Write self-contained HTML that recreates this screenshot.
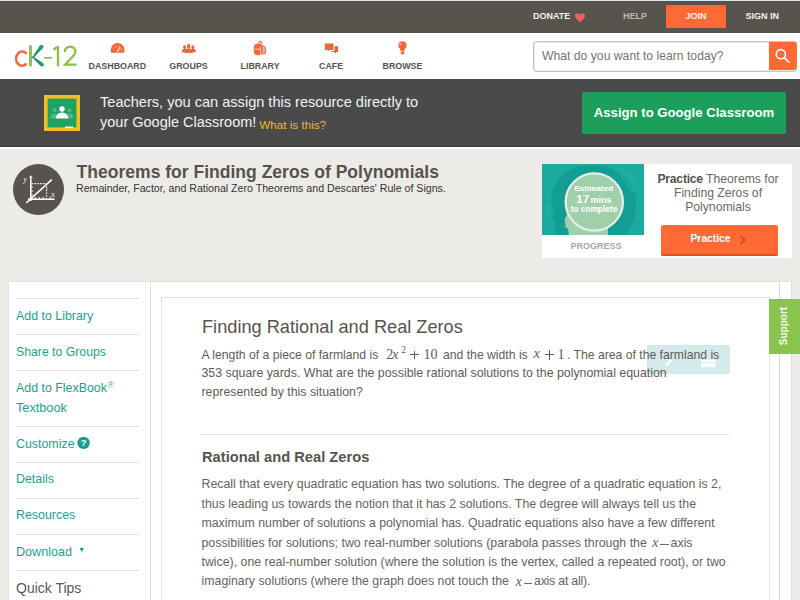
<!DOCTYPE html>
<html><head><meta charset="utf-8">
<style>
html,body{margin:0;padding:0;}
body{width:800px;height:600px;overflow:hidden;position:relative;background:#edebe8;font-family:"Liberation Sans",sans-serif;}
.a{position:absolute;}
.t{position:absolute;white-space:nowrap;line-height:1;}
.b{font-weight:bold;}
</style></head><body>
<!-- top line -->
<div class="a" style="left:0;top:0;width:800px;height:1px;background:#e4e4de"></div>
<!-- top bar -->
<div class="a" style="left:0;top:1px;width:800px;height:32px;background:#57544d"></div>
<div class="t b" style="left:533px;top:12.4px;font-size:9px;color:#f4f2ee">DONATE</div>
<svg class="a" style="left:574px;top:12px" width="12" height="11" viewBox="0 0 12 11"><path d="M6 10.2 C2.5 7.5 1 5.8 1 3.8 C1 2.2 2.2 1.2 3.5 1.2 C4.6 1.2 5.4 1.8 6 2.8 C6.6 1.8 7.4 1.2 8.5 1.2 C9.8 1.2 11 2.2 11 3.8 C11 5.8 9.5 7.5 6 10.2Z" fill="#ef5f62"/></svg>
<div class="t b" style="left:623px;top:12.4px;font-size:9px;color:#bcb8b1">HELP</div>
<div class="a" style="left:666px;top:5px;width:60px;height:23px;background:#fe6934;border-radius:1px"></div>
<div class="t b" style="left:685.5px;top:12.4px;font-size:9px;color:#fbf3ea">JOIN</div>
<div class="t b" style="left:745.5px;top:12.4px;font-size:9px;color:#f4f2ee">SIGN IN</div>

<!-- header -->
<div class="a" style="left:0;top:33px;width:800px;height:46px;background:#fff"></div>
<svg class="a" style="left:0;top:33px" width="90" height="46" viewBox="0 33 90 46">
 <path d="M25.8 53 A6 7.1 0 1 0 25.8 64.3" fill="none" stroke="#ef6a3c" stroke-width="2.6" stroke-linecap="round"/>
 <rect x="29" y="45.3" width="3" height="21" fill="#8cc45a"/>
 <path d="M31.8 58.2 Q36 51.5 40 45.6 Q42 44.2 43.4 46.2 Q43.6 47.6 42.4 48.6 Q37.5 53.5 33.2 58.2 Z" fill="#128c66"/>
 <path d="M31.8 56.4 L33.2 56.4 Q38.5 60.2 43.2 63.2 Q44.4 64.6 43.4 66 Q42 66.8 40.8 66 Q36 61.5 31.8 56.4 Z" fill="#128c66"/>
 <path d="M40.6 46.4 Q42 45.6 42.6 46.8 Q39 50.5 36.2 53.5 Q38.2 50 40.6 46.4Z" fill="#2bb587" opacity="0.8"/>
 <path d="M36.5 60 Q40 62.5 42.6 64.3 Q42.8 65.3 42 65.5 Q39 62.8 36.5 60Z" fill="#2bb587" opacity="0.8"/>
 <rect x="44.2" y="57" width="7.8" height="1.8" fill="#8cc152"/>
 <path d="M53.4 49.6 L58 46.8 L58 66.2" fill="none" stroke="#8cc152" stroke-width="2.4" stroke-linejoin="round"/>
 <path d="M64.8 52 C65 48.5 67.3 46.8 70.2 46.8 C73.3 46.8 75.4 48.8 75.4 51.5 C75.4 53.8 74 55.3 72 57.3 L65.2 64.6 L76.6 64.6" fill="none" stroke="#8cc152" stroke-width="2.4"/>
</svg>
<!-- nav icons -->
<svg class="a" style="left:0;top:33px" width="440" height="46" viewBox="0 33 440 46">
 <!-- dashboard gauge -->
 <path d="M110.8 52.8 L110.8 49.9 A6.85 6.85 0 0 1 124.5 49.9 L124.5 52.8 Z" fill="#f0673a"/>
 <path d="M113.3 50.2 A4.4 4.4 0 0 1 122 50.2" fill="none" stroke="#fcd9c8" stroke-width="0.9" stroke-dasharray="1 0.9"/>
 <path d="M117.2 51.8 L119.8 47.8" stroke="#fde6da" stroke-width="1.3" stroke-linecap="round"/>
 <!-- groups -->
 <ellipse cx="184.6" cy="47.2" rx="1.4" ry="2" fill="#e9603c"/>
 <path d="M182.1 52.3 L182.1 50.6 Q182.3 48.9 184.6 48.8 Q186 48.9 186 50 L186 52.3Z" fill="#e9603c"/>
 <ellipse cx="192.9" cy="47.2" rx="1.4" ry="2" fill="#e9603c"/>
 <path d="M191.6 52.3 L191.6 50 Q191.6 48.9 192.9 48.8 Q195.4 48.9 195.6 50.6 L195.6 52.3Z" fill="#e9603c"/>
 <ellipse cx="188.7" cy="46.3" rx="1.75" ry="2.5" fill="#f0673a"/>
 <path d="M184.8 52.9 L184.8 50.8 Q185 48.6 188.7 48.4 Q192.6 48.6 192.8 50.8 L192.8 52.9Z" fill="#f0673a"/>
 <!-- library backpack -->
 <path d="M262.6 45 Q266.2 46 266.2 49.5 L266.2 52 Q266 54.6 262.5 54.8 Z" fill="#e77a62"/>
 <path d="M262.5 46.2 Q264.8 47 264.8 49.5 L264.8 52 Q264.7 53.4 262.5 53.6 Z" fill="#fff" opacity="0.55"/>
 <rect x="253.8" y="43.7" width="9" height="11.6" rx="3.6" ry="4" fill="#f0673a"/>
 <path d="M258.8 44 Q259 41.3 260.6 41.3 Q262 41.5 262 44" fill="none" stroke="#e8624a" stroke-width="1.1"/>
 <path d="M254.6 49.2 L260.3 49.2 M260.6 47 L260.6 55.3" stroke="#fbd7c8" stroke-width="0.9"/>
 <!-- cafe -->
 <path d="M324.8 43.5 L333.5 43.5 L333.5 49.9 L329.2 49.9 L327.6 51.7 L327.6 49.9 L324.8 49.9 Z" fill="#f0673a"/>
 <path d="M334.6 46.3 L338 46.3 L338 52 L336.2 52 L335.4 53.8 L334.2 52 L331.5 52 L331.5 50.9 L334.6 50.9 Z" fill="#ec5f3a"/>
 <!-- browse bulb -->
 <path d="M402.5 41.2 C405 41.2 406.7 43.1 406.7 45.3 C406.7 47.2 405.2 48.3 404.6 49.6 L404.5 51 L400.5 51 L400.4 49.6 C399.8 48.3 398.3 47.2 398.3 45.3 C398.3 43.1 400 41.2 402.5 41.2Z" fill="#f0673a"/>
 <path d="M400.6 51.6 L404.4 51.6 L404.2 53.6 Q403.5 54.7 402.5 54.7 Q401.5 54.7 400.8 53.6Z" fill="#ec6a45"/>
 <path d="M399.9 45.5 Q400 43.8 401.3 43.2" fill="none" stroke="#fcd3c0" stroke-width="0.9"/>
</svg>
<div class="t b" style="left:88.5px;top:61.9px;font-size:8.9px;color:#57534d">DASHBOARD</div>
<div class="t b" style="left:169.3px;top:61.9px;font-size:8.9px;color:#57534d">GROUPS</div>
<div class="t b" style="left:240.5px;top:61.9px;font-size:8.9px;color:#57534d">LIBRARY</div>
<div class="t b" style="left:319px;top:61.9px;font-size:8.9px;color:#57534d">CAFE</div>
<div class="t b" style="left:382.5px;top:61.9px;font-size:8.9px;color:#57534d">BROWSE</div>
<!-- search -->
<div class="a" style="left:533px;top:41px;width:264px;height:31px;border:1px solid #c9c6c0;border-radius:3px;background:#fff;box-sizing:border-box;box-shadow:inset 0 0 0 1px rgba(205,202,196,0.45)"></div>
<div class="t" style="left:542px;top:49.8px;font-size:12.2px;color:#77736d">What do you want to learn today?</div>
<div class="a" style="left:769px;top:42px;width:28px;height:28px;background:#fe6934;border-radius:0 3px 3px 0"></div>
<svg class="a" style="left:769px;top:42px" width="28" height="28" viewBox="0 0 28 28"><circle cx="11.8" cy="12.2" r="4.6" fill="none" stroke="#fff" stroke-width="1.6"/><path d="M15.2 15.6 L19.8 20.2" stroke="#fff" stroke-width="1.8" stroke-linecap="round"/></svg>

<!-- teacher banner -->
<div class="a" style="left:0;top:79px;width:800px;height:68px;background:#4a4a4a;border-bottom:1px solid #3a3a3a;box-sizing:border-box"></div>
<div class="a" style="left:0;top:147px;width:800px;height:1.5px;background:#fff"></div>
<svg class="a" style="left:44px;top:95px" width="36" height="36" viewBox="0 0 36 36">
 <rect x="0" y="0" width="36" height="36" fill="#f5be1e"/>
 <rect x="3.6" y="3.6" width="28.8" height="28.8" fill="#1ea362"/>
 <circle cx="10.5" cy="15.2" r="2" fill="#55b985"/>
 <circle cx="25.5" cy="15.2" r="2" fill="#55b985"/>
 <path d="M6.5 23.5 Q7 18.5 10.5 18.5 Q14 18.5 14.5 23.5Z" fill="#55b985"/>
 <path d="M21.5 23.5 Q22 18.5 25.5 18.5 Q29 18.5 29.5 23.5Z" fill="#55b985"/>
 <circle cx="18" cy="14" r="2.7" fill="#fff"/>
 <path d="M11.8 23.6 Q12.2 17.6 18 17.6 Q23.8 17.6 24.2 23.6Z" fill="#fff"/>
 <rect x="21" y="31.6" width="8" height="1.4" fill="#fff"/>
</svg>
<div class="t" style="left:100px;top:94.7px;font-size:14.57px;color:#f2f2f2">Teachers, you can assign this resource directly to</div>
<div class="t" style="left:100px;top:114.7px;font-size:14.5px;color:#f2f2f2">your Google Classroom!</div>
<div class="t" style="left:259.2px;top:118.6px;font-size:11.7px;color:#e9b82c">What is this?</div>
<div class="a" style="left:582px;top:92px;width:204px;height:42px;background:#1b9f5a;border-radius:2px"></div>
<div class="t b" style="left:593.8px;top:105.6px;font-size:13.15px;color:#fff">Assign to Google Classroom</div>

<!-- title area -->
<div class="a" style="left:13px;top:164px;width:51px;height:51px;border-radius:50%;background:#57544d"></div>
<svg class="a" style="left:13px;top:164px" width="51" height="51" viewBox="13 164 51 51" fill="none" stroke="#fff">
 <path d="M30.8 177 L30.8 201" stroke-width="1.6"/>
 <path d="M29.5 177.6 L30.8 175.8 L32.1 177.6" stroke-width="1"/>
 <path d="M28 199.2 L54.5 199.2" stroke-width="1.6"/>
 <path d="M26.2 203 L51.8 179.6" stroke-width="1.6"/>
 <path d="M31.5 183.6 L46.2 183.6 M46.6 184 L46.6 198.5" stroke-width="1.1" stroke-dasharray="1.6 1.2"/>
 <path d="M30.8 187 L33.2 187 M30.8 191 L33.2 191 M30.8 195 L33.2 195 M35.2 199.2 L35.2 196.8 M39.2 199.2 L39.2 196.8 M43.2 199.2 L43.2 196.8 M50.2 199.2 L50.2 196.8" stroke-width="0.9"/>
 <text x="23.6" y="182" font-family="Liberation Serif" font-style="italic" font-size="7.5" fill="#fff" stroke="none">y</text>
 <text x="51.2" y="196.5" font-family="Liberation Serif" font-style="italic" font-size="7.5" fill="#fff" stroke="none">x</text>
</svg>
<div class="t b" style="left:76.6px;top:164.4px;font-size:17.55px;color:#57534c">Theorems for Finding Zeros of Polynomials</div>
<div class="t" style="left:76px;top:183.3px;font-size:10.62px;color:#34322e">Remainder, Factor, and Rational Zero Theorems and Descartes' Rule of Signs.</div>

<!-- practice card -->
<div class="a" style="left:542px;top:164px;width:250px;height:94px;background:#fff"></div>
<svg class="a" style="left:542px;top:164px" width="102" height="71" viewBox="0 0 102 71">
 <rect width="102" height="71" fill="#1aaaa0"/>
 <path d="M12 71 L14 60 Q8 54 12 46 Q7 38 10 30 Q14 10 36 3 Q58 -3 78 8 Q96 20 94 44 Q92 60 84 71Z" fill="#149d94"/>
 <path d="M70 4 Q86 2 92 14 Q98 26 90 30 Q84 18 70 4Z" fill="#22b2a6" opacity="0.5"/>
 <path d="M4 40 Q10 36 8 48 Q6 56 2 54Z" fill="#23b0a5" opacity="0.5"/>
 <circle cx="52.3" cy="38" r="28.6" fill="#9fd0aa"/>
 <path d="M26 48 L22.8 55 Q22 56.5 23.4 57.3 L22.8 59 Q22.6 60.2 23.8 60.6 L23.2 62.5 Q23.5 64.5 26 64.8 L27 71 L66 71 L66 60 L40 50Z" fill="#9fd0aa"/>
 <circle cx="52.3" cy="38" r="28.6" fill="none" stroke="#e6ede6" stroke-width="2.3"/>
</svg>
<div class="t b" style="left:574.4px;top:185px;font-size:8.1px;color:#fff">Estimated</div>
<div class="t b" style="left:576.3px;top:193.4px;font-size:11.6px;color:#fff">17</div>
<div class="t b" style="left:590.6px;top:195.6px;font-size:9px;color:#fff">mins</div>
<div class="t b" style="left:570.5px;top:204.6px;font-size:8.35px;color:#fff">to complete</div>
<div class="t b" style="left:570.5px;top:242.3px;font-size:9px;color:#aaa7a1">PROGRESS</div>
<div class="a" style="left:644px;top:172.4px;width:148px;text-align:center;font-size:12.2px;line-height:14px;color:#6b6862">
<span style="font-weight:bold;color:#57534d;letter-spacing:-0.25px">Practice</span> Theorems for<br>Finding Zeros of<br>Polynomials</div>
<div class="a" style="left:661px;top:225px;width:117px;height:31px;background:#fe6934;border-radius:2px;box-shadow:inset 0 -2px 0 #d9541c"></div>
<div class="t b" style="left:690.5px;top:233.6px;font-size:10.3px;color:#fff">Practice</div>
<svg class="a" style="left:738px;top:235px" width="10" height="10" viewBox="0 0 10 10"><path d="M2.5 1.2 L6.6 5 L2.5 8.8" fill="none" stroke="#c95023" stroke-width="2"/></svg>

<!-- main panels -->
<div class="a" style="left:8px;top:281px;width:143px;height:330px;background:#fff;border:1px solid #e6e4e0;border-right:none;box-sizing:border-box"></div>
<div class="a" style="left:145px;top:282px;width:1px;height:330px;background:#f6f5f3"></div>
<div class="a" style="left:150px;top:281px;width:630px;height:330px;background:#fff;border-left:1.5px solid #dddbd7;border-top:1.5px solid #dddbd7;border-right:1px solid #dddbd7;box-sizing:border-box"></div>
<div class="a" style="left:780px;top:281px;width:12px;height:330px;background:#fff;border-right:1px solid #dddbd7;border-top:1px solid #e6e4e0;box-sizing:border-box"></div>
<div class="a" style="left:161px;top:297px;width:609px;height:330px;background:#fff;border-left:1px solid #e3e1dd;border-top:1px solid #e3e1dd;border-right:1px solid #e8e6e2;box-sizing:border-box"></div>

<!-- sidebar -->
<div class="a" style="left:16px;top:298px;width:123px;height:1px;background:#e3e1dd"></div>
<div class="t" style="left:16px;top:310.2px;font-size:12.4px;color:#1e9f8b">Add to Library</div>
<div class="a" style="left:16px;top:334px;width:123px;height:1px;background:#e3e1dd"></div>
<div class="t" style="left:16px;top:346px;font-size:12.25px;color:#1e9f8b">Share to Groups</div>
<div class="a" style="left:16px;top:370px;width:123px;height:1px;background:#e3e1dd"></div>
<div class="t" style="left:16px;top:382.3px;font-size:12.4px;color:#1e9f8b">Add to FlexBook<span style="font-size:8.5px;position:relative;top:-4.5px;left:0.5px;color:#4fb3a2">®</span></div>
<div class="t" style="left:16px;top:401.8px;font-size:12.7px;color:#1e9f8b">Textbook</div>
<div class="a" style="left:16px;top:426px;width:123px;height:1px;background:#e3e1dd"></div>
<div class="t" style="left:16px;top:437.5px;font-size:12.4px;color:#1e9f8b">Customize</div>
<svg class="a" style="left:77px;top:436px" width="14" height="14" viewBox="0 0 14 14"><circle cx="6.6" cy="6.9" r="6.2" fill="#199c8c"/><text x="6.6" y="10.2" text-anchor="middle" font-family="Liberation Sans" font-weight="bold" font-size="9.5" fill="#fff">?</text></svg>
<div class="a" style="left:16px;top:462px;width:123px;height:1px;background:#e3e1dd"></div>
<div class="t" style="left:16px;top:473.2px;font-size:12.4px;color:#1e9f8b">Details</div>
<div class="a" style="left:16px;top:497.5px;width:123px;height:1px;background:#e3e1dd"></div>
<div class="t" style="left:16px;top:509px;font-size:12.4px;color:#1e9f8b">Resources</div>
<div class="a" style="left:16px;top:534px;width:123px;height:1px;background:#e3e1dd"></div>
<div class="t" style="left:16px;top:545.5px;font-size:12.6px;color:#1e9f8b">Download</div>
<svg class="a" style="left:78.5px;top:547px" width="6" height="6" viewBox="0 0 6 6"><path d="M0.5 1 L5 1 L2.75 5Z" fill="#199c8c"/></svg>
<div class="a" style="left:16px;top:569.5px;width:123px;height:1px;background:#e3e1dd"></div>
<div class="t" style="left:16px;top:581.1px;font-size:14px;color:#5a5751">Quick Tips</div>

<!-- translucent overlay -->
<div class="a" style="left:647px;top:344.5px;width:83px;height:29px;background:#d5e8ea;border-radius:2px"></div>
<svg class="a" style="left:647px;top:344.5px" width="83" height="29" viewBox="0 0 83 29"><path d="M17.5 20.5 L23.5 14 L25.5 15.5 L19.5 21.5 Z" fill="#ffffff" opacity="0.85"/><rect x="54.2" y="14.6" width="14.2" height="7.6" fill="#ffffff" opacity="0.9"/><path d="M55.5 17.6 L67 17.6" stroke="#d5e8ea" stroke-width="0.8"/></svg>
<!-- content -->
<div class="t" style="left:202px;top:318.4px;font-size:18.2px;color:#57534d">Finding Rational and Real Zeros</div>
<div class="t" style="left:201.5px;top:348.5px;font-size:12.2px;color:#5f5c56">A length of a piece of farmland is</div>
<div class="t" style="left:201.5px;top:367px;font-size:12.35px;color:#5f5c56">353 square yards. What are the possible rational solutions to the polynomial equation</div>
<div class="t" style="left:201.5px;top:385.8px;font-size:12.35px;color:#5f5c56">represented by this situation?</div>
<!-- math -->
<div class="t" style="left:386.2px;top:346.94px;font-size:14.1px;font-family:'Liberation Serif';color:#5f5c56">2</div>
<div class="t" style="left:392.0px;top:346.61px;font-size:14.5px;font-family:'Liberation Serif';font-style:italic;color:#5f5c56">x</div>
<div class="t" style="left:401.3px;top:344.71px;font-size:9.6px;font-family:'Liberation Serif';color:#5f5c56">2</div>
<div class="a" style="left:410px;top:354.30px;width:9.40px;height:1px;background:#5f5c56"></div>
<div class="a" style="left:414.20px;top:350.5px;width:1px;height:8.60px;background:#5f5c56"></div>
<div class="t" style="left:423.4px;top:346.94px;font-size:14.1px;font-family:'Liberation Serif';color:#5f5c56">10</div>
<div class="t" style="left:533.4px;top:346.36px;font-size:14.5px;font-family:'Liberation Serif';font-style:italic;color:#5f5c56">x</div>
<div class="a" style="left:545px;top:354.25px;width:9.40px;height:1px;background:#5f5c56"></div>
<div class="a" style="left:549.20px;top:349.9px;width:1px;height:9.70px;background:#5f5c56"></div>
<div class="t" style="left:557.4px;top:346.69px;font-size:14.1px;font-family:'Liberation Serif';color:#5f5c56">1</div>
<div class="t" style="left:443px;top:348.5px;font-size:12.2px;color:#5f5c56">and the width is</div>

<div class="t" style="left:567px;top:348.5px;font-size:12.2px;color:#5f5c56">. The area of the farmland is</div>


<div class="a" style="left:200px;top:434px;width:530px;height:1px;background:#e3e1dd"></div>
<div class="t b" style="left:202px;top:450px;font-size:14.7px;color:#57534d">Rational and Real Zeros</div>
<div class="t" style="left:201.5px;top:478.3px;font-size:12.35px;color:#66635d">Recall that every quadratic equation has two solutions. The degree of a quadratic equation is 2,</div>
<div class="t" style="left:201.5px;top:497.5px;font-size:12.35px;color:#66635d">thus leading us towards the notion that it has 2 solutions. The degree will always tell us the</div>
<div class="t" style="left:201.5px;top:517px;font-size:12.31px;color:#66635d">maximum number of solutions a polynomial has. Quadratic equations also have a few different</div>
<div class="t" style="left:201.5px;top:536.5px;font-size:12.35px;color:#66635d">possibilities for solutions; two real-number solutions (parabola passes through the</div>
<div class="t" style="left:652px;top:535.3px;font-size:14.5px;font-family:'Liberation Serif';font-style:italic;color:#66635d">x</div><div class="a" style="left:660.3px;top:543.50px;width:8.45px;height:1px;background:#6f6c66"></div>
<div class="t" style="left:670.6px;top:536.5px;font-size:12.35px;color:#66635d">axis</div>
<div class="t" style="left:201.5px;top:556.3px;font-size:12.35px;color:#66635d">twice), one real-number solution (where the solution is the vertex, called a repeated root), or two</div>
<div class="t" style="left:201.5px;top:575.3px;font-size:12.35px;color:#66635d">imaginary solutions (where the graph does not touch the</div>
<div class="t" style="left:515.4px;top:574.3px;font-size:14.5px;font-family:'Liberation Serif';font-style:italic;color:#66635d">x</div><div class="a" style="left:523.75px;top:582.50px;width:8.45px;height:1px;background:#6f6c66"></div>
<div class="t" style="left:534px;top:575.3px;font-size:12.3px;letter-spacing:-0.2px;color:#66635d">axis at all).</div>

<!-- support tab -->
<div class="a" style="left:768.5px;top:298.5px;width:32px;height:55px;background:#8bc34f"></div>
<div class="t b" style="left:783.6px;top:326px;font-size:10px;color:#f2f8ea;transform:translate(-50%,-50%) rotate(-90deg);">Support</div>
</body></html>
